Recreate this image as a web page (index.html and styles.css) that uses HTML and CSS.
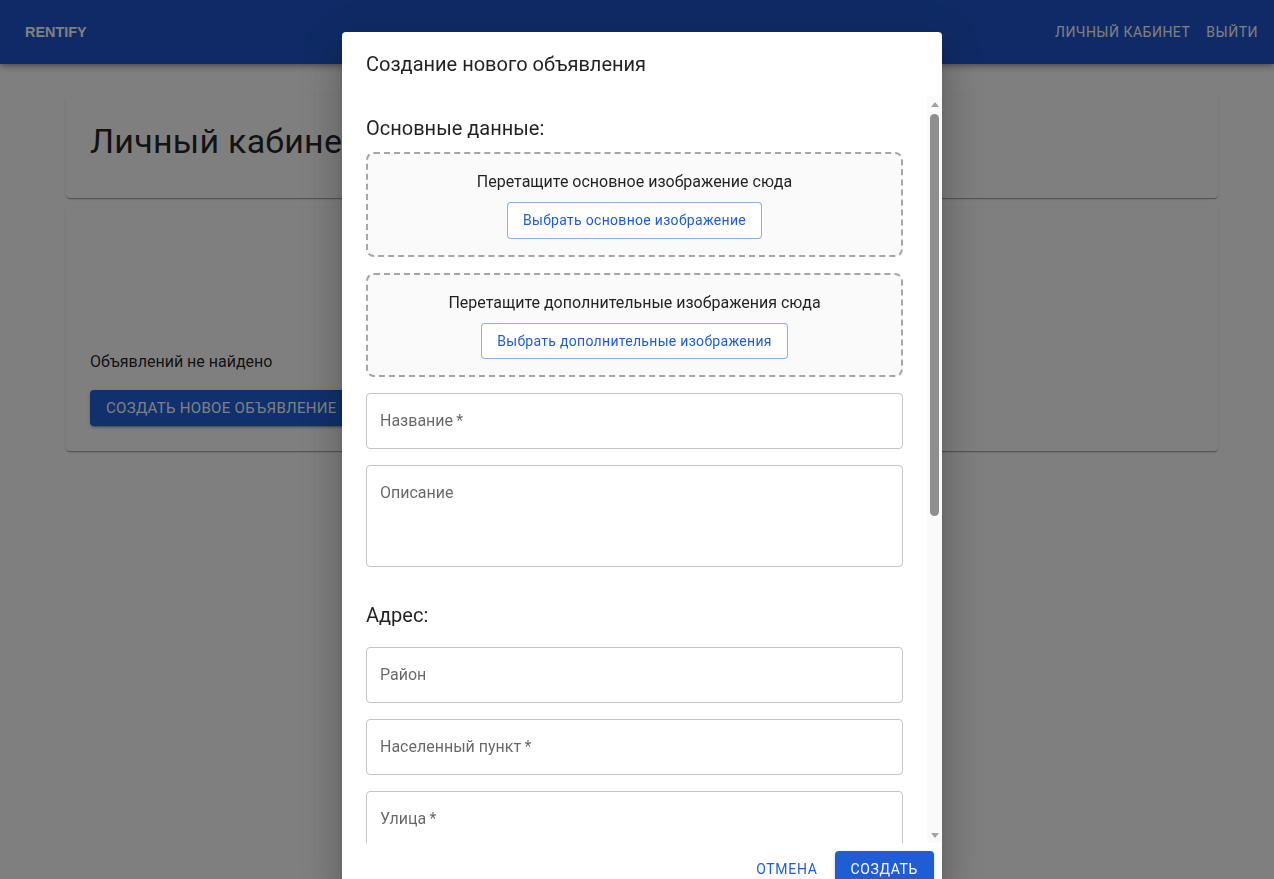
FILE: index.html
```html
<!DOCTYPE html>
<html lang="ru">
<head>
<meta charset="utf-8">
<title>Rentify</title>
<link rel="stylesheet" href="styles.css">
</head>
<body>
<header class="app-bar">
  <div class="logo">RENTIFY</div>
  <nav class="nav">
    <button class="nav-btn">Личный кабинет</button>
    <button class="nav-btn">Выйти</button>
  </nav>
</header>

<main class="container">
  <section class="card card-head">
    <h1 class="page-title">Личный кабинет</h1>
  </section>
  <section class="card card-list">
    <div class="list-empty-space"></div>
    <p class="empty-text">Объявлений не найдено</p>
    <button class="btn-contained btn-bg">Создать новое объявление</button>
  </section>
</main>

<div class="backdrop"></div>

<div class="dialog" role="dialog">
  <h2 class="dialog-title">Создание нового объявления</h2>
  <div class="dialog-body">
    <div class="dialog-content">
      <h3 class="section-title first">Основные данные:</h3>
      <div class="dropzone">
        <p class="dropzone-text">Перетащите основное изображение сюда</p>
        <button class="btn-outlined">Выбрать основное изображение</button>
      </div>
      <div class="dropzone">
        <p class="dropzone-text">Перетащите дополнительные изображения сюда</p>
        <button class="btn-outlined">Выбрать дополнительные изображения</button>
      </div>
      <div class="field"><span class="field-label">Название&thinsp;*</span></div>
      <div class="field field-multi"><span class="field-label">Описание</span></div>

      <h3 class="section-title">Адрес:</h3>
      <div class="field"><span class="field-label">Район</span></div>
      <div class="field"><span class="field-label">Населенный пункт&thinsp;*</span></div>
      <div class="field"><span class="field-label">Улица&thinsp;*</span></div>
      <div class="field"><span class="field-label">Дом&thinsp;*</span></div>
      <div class="field"><span class="field-label">Квартира</span></div>

      <h3 class="section-title">Характеристики:</h3>
      <div class="field"><span class="field-label">Цена&thinsp;*</span></div>
      <div class="field"><span class="field-label">Площадь&thinsp;*</span></div>
      <div class="field"><span class="field-label">Количество комнат</span></div>
      <div class="field"><span class="field-label">Этаж</span></div>
    </div>
    <div class="scrollbar" aria-hidden="true">
      <div class="sb-btn"><span class="sb-arrow-up"></span></div>
      <div class="sb-track"><div class="sb-thumb"></div></div>
      <div class="sb-btn"><span class="sb-arrow-down"></span></div>
    </div>
  </div>
  <div class="dialog-actions">
    <button class="btn-text">Отмена</button>
    <button class="btn-contained">Создать</button>
  </div>
</div>
</body>
</html>
```
FILE: styles.css
```css
* { box-sizing: border-box; }

html, body {
  margin: 0;
  height: 100%;
}

body {
  font-family: Roboto, "Liberation Sans", Arial, sans-serif;
  background: #ffffff;
  color: rgba(0, 0, 0, 0.87);
  overflow: hidden;
}

button {
  font-family: inherit;
  cursor: pointer;
}

/* App bar */
.app-bar {
  height: 64px;
  background: #1e55cd;
  color: #ffffff;
  display: flex;
  align-items: center;
  justify-content: space-between;
  padding: 0 8px 0 25px;
  box-shadow: 0 2px 4px -1px rgba(0,0,0,0.2), 0 4px 5px 0 rgba(0,0,0,0.14), 0 1px 10px 0 rgba(0,0,0,0.12);
}

.logo {
  font-family: "Liberation Sans", Arial, sans-serif;
  font-weight: 700;
  font-size: 14.4px;
}

.nav {
  display: flex;
}

.nav-btn {
  background: none;
  border: 0;
  color: #ffffff;
  font-size: 14px;
  font-weight: 400;
  letter-spacing: 0.5px;
  text-transform: uppercase;
  line-height: 24px;
  padding: 6px 8px;
}

/* Page */
.container {
  width: 1152px;
  margin-left: 66px;
  padding-top: 32px;
}

.card {
  background: #ffffff;
  border-radius: 4px;
  box-shadow: 0 2px 1px -1px rgba(0,0,0,0.2), 0 1px 1px 0 rgba(0,0,0,0.14), 0 1px 3px 0 rgba(0,0,0,0.12);
  padding: 24px;
}

.card-head {
  height: 102px;
}

.page-title {
  margin: 0;
  font-size: 34px;
  font-weight: 400;
  line-height: 42px;
  letter-spacing: 0.25px;
}

.card-list {
  margin-top: 9px;
  height: 244px;
}

.list-empty-space {
  height: 119px;
}

.empty-text {
  margin: 0;
  font-size: 16px;
  line-height: 24px;
}

/* Buttons */
.btn-contained {
  background: #1f5dd5;
  color: #ffffff;
  border: 0;
  border-radius: 4px;
  font-size: 14px;
  font-weight: 400;
  letter-spacing: 0.6px;
  text-transform: uppercase;
  line-height: 24px;
  padding: 6px 16px;
  box-shadow: 0 3px 1px -2px rgba(0,0,0,0.2), 0 2px 2px 0 rgba(0,0,0,0.14), 0 1px 5px 0 rgba(0,0,0,0.12);
}

.btn-bg {
  margin-top: 16px;
  font-size: 15px;
  letter-spacing: 0.3px;
  background: #2060dc;
}

.btn-text {
  background: none;
  border: 0;
  color: #1f5dd5;
  font-size: 14px;
  font-weight: 400;
  letter-spacing: 0.7px;
  text-transform: uppercase;
  line-height: 24px;
  padding: 6px 8px;
}

.btn-outlined {
  background: #ffffff;
  border: 1px solid rgba(31, 93, 213, 0.5);
  color: #1f5dd5;
  border-radius: 4px;
  font-size: 14px;
  font-weight: 400;
  letter-spacing: 0.3px;
  line-height: 24.5px;
  padding: 5px 15px;
}

/* Backdrop & dialog */
.backdrop {
  position: fixed;
  inset: 0;
  background: rgba(0, 0, 0, 0.5);
}

.dialog {
  position: fixed;
  top: 32px;
  left: 342px;
  width: 600px;
  background: #ffffff;
  border-radius: 4px;
  box-shadow: 0 11px 15px -7px rgba(0,0,0,0.2), 0 24px 38px 3px rgba(0,0,0,0.14), 0 9px 46px 8px rgba(0,0,0,0.12);
  display: flex;
  flex-direction: column;
}

.dialog-title {
  margin: 0;
  padding: 16px 24px;
  font-size: 20px;
  font-weight: 400;
  line-height: 32px;
}

.dialog-body {
  display: flex;
  height: 747px;
}

.dialog-content {
  flex: 1;
  min-width: 0;
  overflow-y: auto;
  scrollbar-width: none;
  padding: 0 24px 20px;
}

.dialog-content::-webkit-scrollbar {
  display: none;
}

/* Drawn scrollbar */
.scrollbar {
  width: 15px;
  flex: none;
  background: #fafafa;
  display: flex;
  flex-direction: column;
}

.sb-btn {
  height: 15px;
  display: flex;
  align-items: center;
  justify-content: center;
}

.sb-arrow-up,
.sb-arrow-down {
  width: 0;
  height: 0;
  border-left: 4.5px solid transparent;
  border-right: 4.5px solid transparent;
}

.sb-arrow-up {
  border-bottom: 5px solid #a3a3a3;
  margin-top: 1px;
}

.sb-arrow-down {
  border-top: 5px solid #a3a3a3;
  margin-bottom: 1px;
}

.sb-track {
  flex: 1;
  padding-top: 3px;
}

.sb-thumb {
  width: 9px;
  height: 402px;
  margin: 0 auto;
  border-radius: 4.5px;
  background: #8e8e8e;
}

.section-title {
  margin: 32px 0 16px;
  font-size: 20px;
  font-weight: 400;
  line-height: 32px;
}

.section-title.first {
  margin: 16px 0 8px;
}

.dropzone {
  border: 2px dashed #a6a6a6;
  border-radius: 8px;
  background: #fafafa;
  padding: 16px;
  text-align: center;
  margin-bottom: 16px;
}

.dropzone-text {
  margin: 0 0 8px;
  font-size: 16px;
  line-height: 24px;
}

.field {
  height: 56px;
  border: 1px solid #c4c4c4;
  border-radius: 4px;
  display: flex;
  align-items: center;
  padding: 0 13px;
  margin-bottom: 16px;
}

.field-multi {
  height: 102px;
  align-items: flex-start;
  padding-top: 15px;
}

.field-label {
  font-size: 16px;
  line-height: 24px;
  color: rgba(0, 0, 0, 0.6);
}

.dialog-actions {
  display: flex;
  justify-content: flex-end;
  gap: 9px;
  padding: 8px;
}
```
